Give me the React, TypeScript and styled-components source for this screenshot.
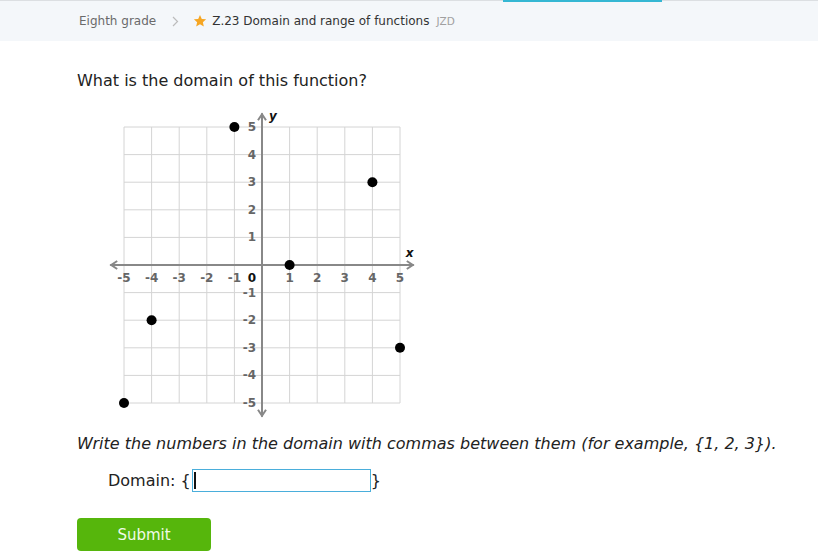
import styled, { createGlobalStyle } from 'styled-components'

const GlobalStyle = createGlobalStyle`
    body {
        margin: 0;
        background: #ffffff;
        font-family: 'DejaVu Sans', Verdana, sans-serif;
        color: #222;
    }
`

const UNIT = 27.6
const OX = 162
const OY = 159
const TICKS = [-5, -4, -3, -2, -1, 1, 2, 3, 4, 5]
const POINTS: [number, number][] = [
    [-5, -5],
    [-4, -2],
    [-1, 5],
    [1, 0],
    [4, 3],
    [5, -3],
]

const px = (x: number) => OX + x * UNIT
const py = (y: number) => OY - y * UNIT

function Graph(): JSX.Element {
    const all = [-5, -4, -3, -2, -1, 0, 1, 2, 3, 4, 5]
    const left = px(-5.5)
    const right = px(5.5)
    const top = py(5.5)
    const bottom = py(-5.5)
    return (
        <GraphSvg width={320} height={325} viewBox="0 0 320 325">
            {all.map((i) => (
                <line key={'v' + i} x1={px(i)} y1={py(5)} x2={px(i)} y2={py(-5)} stroke="#d4d4d4" strokeWidth={1} />
            ))}
            {all.map((i) => (
                <line key={'h' + i} x1={px(-5)} y1={py(i)} x2={px(5)} y2={py(i)} stroke="#d4d4d4" strokeWidth={1} />
            ))}
            <g stroke="#888" strokeWidth={2} fill="none">
                <line x1={left} y1={OY} x2={right} y2={OY} />
                <line x1={OX} y1={top} x2={OX} y2={bottom} />
                <polyline points={`${left + 7},${OY - 4} ${left + 1},${OY} ${left + 7},${OY + 4}`} />
                <polyline points={`${right - 7},${OY - 4} ${right - 1},${OY} ${right - 7},${OY + 4}`} />
                <polyline points={`${OX - 4},${top + 7} ${OX},${top + 1} ${OX + 4},${top + 7}`} />
                <polyline points={`${OX - 4},${bottom - 7} ${OX},${bottom - 1} ${OX + 4},${bottom - 7}`} />
            </g>
            <g fontFamily="'DejaVu Sans', Verdana, sans-serif" fontWeight="bold" fontSize={12} fill="#666">
                {TICKS.map((t) => (
                    <text key={'x' + t} x={px(t)} y={OY + 17} textAnchor="middle">
                        {t}
                    </text>
                ))}
                {TICKS.map((t) => (
                    <text key={'y' + t} x={OX - 6} y={py(t) + 4} textAnchor="end">
                        {t}
                    </text>
                ))}
                <text x={OX - 10} y={OY + 17} textAnchor="middle" fill="#111">
                    0
                </text>
                <text x={OX + 7} y={top + 7} fontStyle="italic" fill="#111">
                    y
                </text>
                <text x={right - 8} y={OY - 8} fontStyle="italic" fill="#111">
                    x
                </text>
            </g>
            {POINTS.map(([x, y]) => (
                <circle key={`${x},${y}`} cx={px(x)} cy={py(y)} r={5} fill="#000" />
            ))}
        </GraphSvg>
    )
}

export default function App(): JSX.Element {
    return (
        <>
            <GlobalStyle />
            <Header>
                <ActiveTab />
                <Crumb>Eighth grade</Crumb>
                <Chevron>
                    <svg width="7" height="11" viewBox="0 0 7 11">
                        <polyline points="1,1 5.5,5.5 1,10" fill="none" stroke="#bcbcbc" strokeWidth="1.2" />
                    </svg>
                </Chevron>
                <Star>
                    <svg width="14" height="14" viewBox="0 0 24 24">
                        <path
                            d="M12 1.5l3.1 7 7.4.6-5.6 4.9 1.7 7.3L12 17.4l-6.6 3.9 1.7-7.3L1.5 9.1l7.4-.6z"
                            fill="#f6a623"
                        />
                    </svg>
                </Star>
                <SkillName>Z.23 Domain and range of functions</SkillName>
                <SkillCode>JZD</SkillCode>
            </Header>
            <Main>
                <Question>What is the domain of this function?</Question>
                <Graph />
                <Instruction>
                    Write the numbers in the domain with commas between them (for example, {'{'}1, 2, 3{'}'}).
                </Instruction>
                <AnswerRow>
                    Domain: {'{'}
                    <AnswerInput>
                        <Caret />
                    </AnswerInput>
                    {'}'}
                </AnswerRow>
                <SubmitButton>Submit</SubmitButton>
            </Main>
        </>
    )
}

const Header = styled.div`
    position: relative;
    height: 40px;
    border-top: 1px solid #dcdfe2;
    background: #f4f7fa;
    display: flex;
    align-items: center;
    padding-left: 79px;
    font-size: 12px;
`

const ActiveTab = styled.div`
    position: absolute;
    top: -1px;
    left: 503px;
    width: 159px;
    height: 2px;
    background: #35b7d3;
`

const Crumb = styled.span`
    color: #6a6a6a;
`

const Chevron = styled.span`
    display: flex;
    margin: 0 14px 0 16px;
`

const Star = styled.span`
    display: flex;
    margin-right: 5px;
`

const SkillName = styled.span`
    color: #333;
`

const SkillCode = styled.span`
    color: #a0a0a0;
    font-size: 10.5px;
    margin-left: 7px;
`

const Main = styled.div`
    padding: 30px 0 0 77px;
`

const Question = styled.div`
    font-size: 16px;
    line-height: 20px;
`

const GraphSvg = styled.svg`
    display: block;
    margin: 15px 0 0 23px;
`

const Instruction = styled.div`
    font-size: 16px;
    font-style: italic;
    line-height: 20px;
    margin-top: 3px;
`

const AnswerRow = styled.div`
    display: flex;
    align-items: center;
    font-size: 16px;
    margin: 15px 0 0 31px;
`

const AnswerInput = styled.div`
    width: 176px;
    height: 21px;
    border: 1px solid #4aaedb;
    margin-left: 1px;
    display: flex;
    align-items: center;
    padding-left: 1px;
`

const Caret = styled.div`
    width: 2px;
    height: 17px;
    background: #111;
`

const SubmitButton = styled.button`
    display: block;
    margin-top: 26px;
    width: 134px;
    height: 33px;
    border: none;
    border-radius: 4px;
    background: #56b60c;
    color: #f1fbe8;
    font-family: 'DejaVu Sans', Verdana, sans-serif;
    font-size: 15px;
`
